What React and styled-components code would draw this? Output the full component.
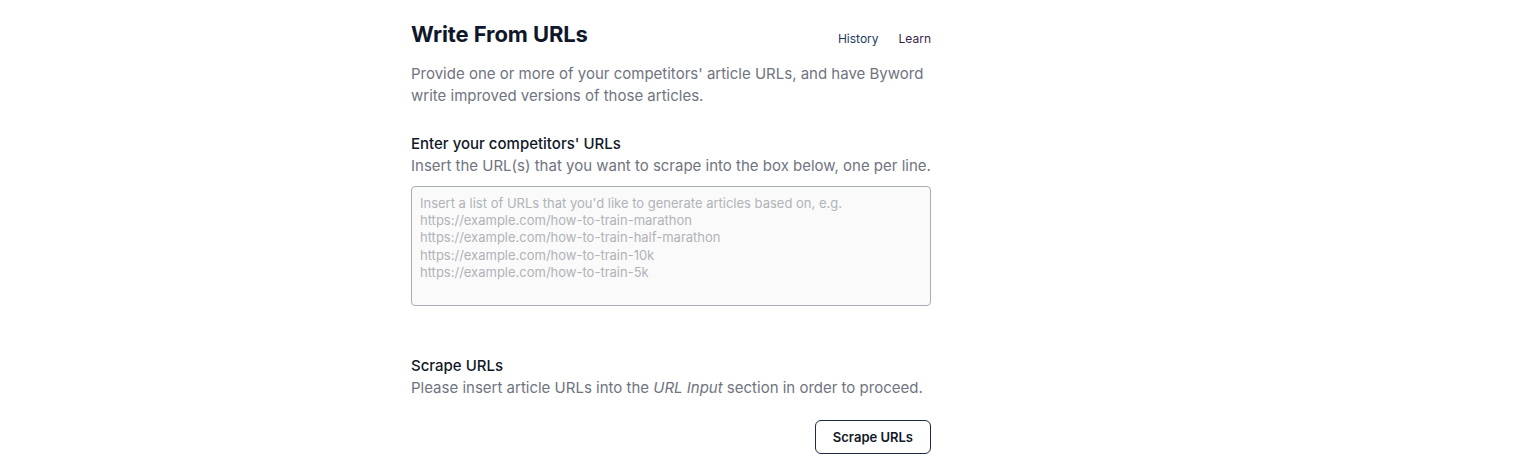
import React from 'react';
import styled, { createGlobalStyle } from 'styled-components';

const GlobalStyle = createGlobalStyle`
  body {
    margin: 0;
    background: #ffffff;
    font-family: Inter, "Noto Sans", sans-serif;
  }
`;

const Page = styled.div`
  width: 520px;
  margin-left: 411px;
  padding-top: 20px;
`;

const Header = styled.div`
  display: flex;
  justify-content: space-between;
  align-items: flex-start;
`;

const Title = styled.h1`
  margin: 0;
  font-size: 22px;
  line-height: 28px;
  font-weight: 700;
  color: #0f172a;
  letter-spacing: -0.1px;
`;

const Links = styled.nav`
  display: flex;
  gap: 20px;
  padding-top: 11px;
`;

const NavLink = styled.a`
  font-size: 12px;
  line-height: 16px;
  color: ${(p) => p.color || '#1e3a5f'};
  text-decoration: none;
  cursor: pointer;
`;

const Description = styled.p`
  margin: 15px 0 0;
  font-size: 15px;
  line-height: 22px;
  color: #6f7480;
`;

const Section = styled.section`
  margin-top: ${(p) => p.top || 0}px;
`;

const SectionTitle = styled.h2`
  margin: 0;
  font-size: 15px;
  line-height: 22px;
  font-weight: 500;
  color: #111827;
`;

const SectionText = styled.p`
  margin: 0;
  font-size: 15px;
  line-height: 22px;
  color: #6f7480;

  em {
    font-style: italic;
  }
`;

const UrlInput = styled.textarea`
  display: block;
  box-sizing: border-box;
  width: 520px;
  height: 120px;
  margin-top: 9px;
  padding: 8px 8px;
  border: 1px solid #a8adb6;
  border-radius: 4px;
  background: #fafafa;
  font-family: Inter, "Noto Sans", sans-serif;
  font-size: 13px;
  line-height: 17.2px;
  color: #111827;
  resize: none;
  outline: none;

  &::placeholder {
    color: #b0b3b8;
  }
`;

const Actions = styled.div`
  display: flex;
  justify-content: flex-end;
  margin-top: 21px;
`;

const Button = styled.button`
  height: 34px;
  padding: 0 17px;
  border: 1px solid #1e2a44;
  border-radius: 6px;
  background: #ffffff;
  font-family: Inter, "Noto Sans", sans-serif;
  font-size: 13px;
  font-weight: 600;
  color: #111827;
  cursor: pointer;
`;

const placeholder = [
  "Insert a list of URLs that you'd like to generate articles based on, e.g.",
  'https://example.com/how-to-train-marathon',
  'https://example.com/how-to-train-half-marathon',
  'https://example.com/how-to-train-10k',
  'https://example.com/how-to-train-5k',
].join('\n');

const App = () => {
  return (
    <>
      <GlobalStyle />
      <Page>
        <Header>
          <Title>Write From URLs</Title>
          <Links>
            <NavLink>History</NavLink>
            <NavLink color="#3b1f4a">Learn</NavLink>
          </Links>
        </Header>
        <Description>
          Provide one or more of your competitors' article URLs, and have Byword
          write improved versions of those articles.
        </Description>

        <Section top={26}>
          <SectionTitle>Enter your competitors' URLs</SectionTitle>
          <SectionText>
            Insert the URL(s) that you want to scrape into the box below, one per line.
          </SectionText>
          <UrlInput placeholder={placeholder} />
        </Section>

        <Section top={49}>
          <SectionTitle>Scrape URLs</SectionTitle>
          <SectionText>
            Please insert article URLs into the <em>URL Input</em> section in order to proceed.
          </SectionText>
          <Actions>
            <Button>Scrape URLs</Button>
          </Actions>
        </Section>
      </Page>
    </>
  );
};

export default App;
